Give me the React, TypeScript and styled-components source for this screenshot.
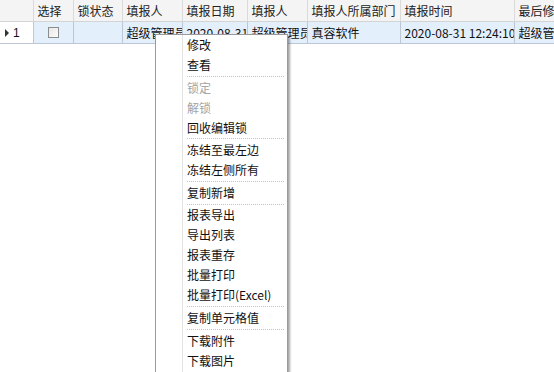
import React from 'react';
import styled, { createGlobalStyle } from 'styled-components';

const GlobalStyle = createGlobalStyle`
  html, body { margin: 0; padding: 0; background: #fff; overflow: hidden; }
  body { font-family: "Noto Sans CJK SC", "Noto Sans", sans-serif; font-size: 12px; color: #1a1a1a; }
`;

const Page = styled.div`
  position: relative;
  width: 554px;
  height: 372px;
  overflow: hidden;
  background: #fff;
`;

const Grid = styled.table`
  border-collapse: collapse;
  table-layout: fixed;
  width: 620px;
`;

const HeadCell = styled.th`
  height: 21px;
  padding: 0 4px;
  background: #f4f4f4;
  border-right: 1px solid #dadada;
  border-bottom: 1px solid #d4d4d4;
  font-weight: normal;
  text-align: left;
  white-space: nowrap;
  overflow: hidden;
  color: #222;
  line-height: 21px;
`;

const Cell = styled.td<{ $lead?: boolean }>`
  height: 20px;
  padding: 0 4px;
  background: ${p => (p.$lead ? '#fff' : '#e4effc')};
  border-right: 1px solid #bcc6d4;
  border-bottom: 1px solid #bcc6d4;
  white-space: nowrap;
  overflow: hidden;
  line-height: 20px;
  color: #111;
`;

const RowMark = styled.span`
  display: inline-flex;
  align-items: center;
  gap: 4px;
  padding-left: 1px;
  font-family: "Liberation Sans", sans-serif;
  font-size: 12px;
  &::before {
    content: '';
    border-left: 4px solid #333;
    border-top: 4px solid transparent;
    border-bottom: 4px solid transparent;
  }
`;

const CheckBox = styled.span`
  display: block;
  margin: 0 auto;
  width: 9px;
  height: 9px;
  border: 1px solid #8c8c8c;
  background: linear-gradient(135deg, #e6e6e6, #fdfdfd);
`;

// context menu floats over the grid
const Menu = styled.div`
  position: absolute;
  left: 155px;
  top: 34px;
  width: 131px;
  border: 1px solid #9a9a9a;
  background: #fff;
  box-shadow: 2px 2px 2px rgba(0, 0, 0, 0.35);
  padding: 0 0 2px 0;
  &::before {
    content: '';
    position: absolute;
    left: 26px;
    top: 0;
    bottom: 0;
    border-left: 1px solid #e2e2e2;
  }
`;

const MenuItem = styled.div<{ $off?: boolean }>`
  height: 20px;
  line-height: 20px;
  padding-left: 31px;
  white-space: nowrap;
  font-size: 12px;
  color: ${p => (p.$off ? '#a4a4a4' : '#111')};
`;

const MenuLine = styled.div`
  margin: 0.8px 3px 0.8px 31px;
  border-top: 1px dotted #c4c4c4;
`;

const columns = [33, 40, 49, 60, 65, 60, 93, 114, 106];
const heads = ['', '选择', '锁状态', '填报人', '填报日期', '填报人', '填报人所属部门', '填报时间', '最后修改人'];

type Entry = { label: string; off?: boolean } | 'line';

const menu: Entry[] = [
  { label: '修改' },
  { label: '查看' },
  'line',
  { label: '锁定', off: true },
  { label: '解锁', off: true },
  { label: '回收编辑锁' },
  'line',
  { label: '冻结至最左边' },
  { label: '冻结左侧所有' },
  'line',
  { label: '复制新增' },
  'line',
  { label: '报表导出' },
  { label: '导出列表' },
  { label: '报表重存' },
  { label: '批量打印' },
  { label: '批量打印(Excel)' },
  'line',
  { label: '复制单元格值' },
  'line',
  { label: '下载附件' },
  { label: '下载图片' },
];

export default function App() {
  return (
    <Page>
      <GlobalStyle />
      <Grid>
        <colgroup>
          {columns.map((w, i) => <col key={i} style={{ width: w }} />)}
        </colgroup>
        <thead>
          <tr>
            {heads.map((h, i) => <HeadCell key={i}>{h}</HeadCell>)}
          </tr>
        </thead>
        <tbody>
          <tr>
            <Cell $lead><RowMark>1</RowMark></Cell>
            <Cell><CheckBox /></Cell>
            <Cell />
            <Cell>超级管理员</Cell>
            <Cell>2020-08-31</Cell>
            <Cell>超级管理员</Cell>
            <Cell>真容软件</Cell>
            <Cell>2020-08-31 12:24:10</Cell>
            <Cell>超级管理员</Cell>
          </tr>
        </tbody>
      </Grid>

      <Menu>
        {menu.map((m, i) =>
          m === 'line'
            ? <MenuLine key={i} />
            : <MenuItem key={i} $off={m.off}>{m.label}</MenuItem>
        )}
      </Menu>
    </Page>
  );
}
